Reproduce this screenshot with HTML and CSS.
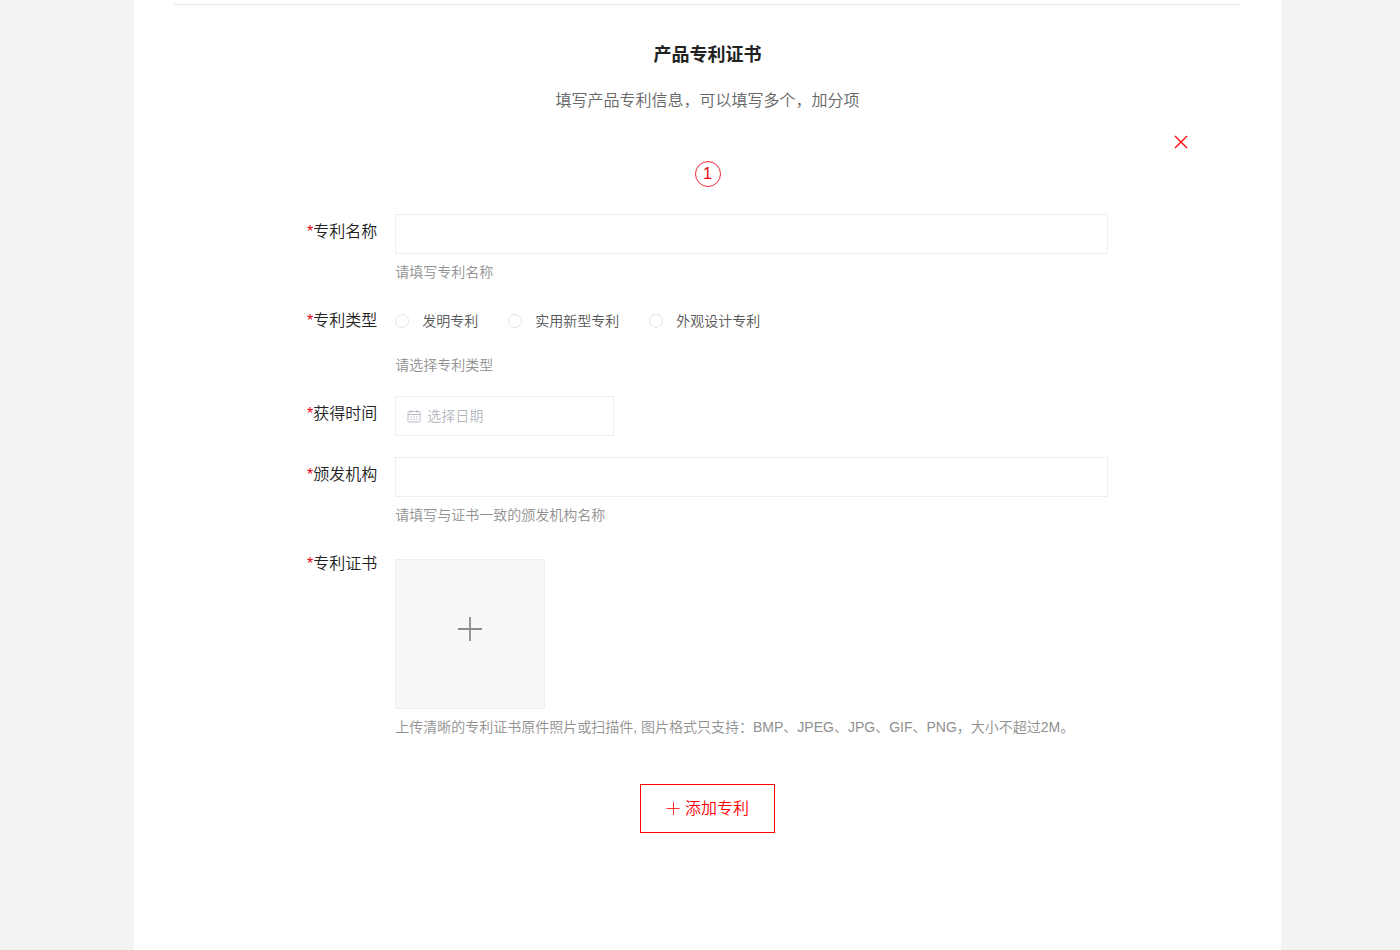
FILE: index.html
```html
<!DOCTYPE html>
<html lang="zh-CN">
<head>
    <meta charset="UTF-8">
    <meta name="viewport" content="width=device-width, initial-scale=1">
    <title>产品专利证书</title>
    <link rel="stylesheet" href="styles.css">
</head>
<body>
    <main class="container">
        <hr class="divider">
        <h2>产品专利证书</h2>
        <p class="subtitle">填写产品专利信息，可以填写多个，加分项</p>
        <div class="close-row">
            <button type="button" class="close-btn" aria-label="删除">
                <svg width="14" height="14" viewBox="0 0 14 14"><path d="M1 1l12 12M13 1L1 13" stroke="currentColor" stroke-width="1.3" fill="none"/></svg>
            </button>
        </div>
        <div class="number">1</div>
        <form class="patent-form">
            <div class="row">
                <label class="row-label" for="patentName"><span class="star">*</span>专利名称</label>
                <div class="field">
                    <input type="text" id="patentName" class="text-input">
                    <p class="hint">请填写专利名称</p>
                </div>
            </div>
            <div class="row" role="radiogroup" aria-labelledby="typeLabel">
                <span class="row-label" id="typeLabel"><span class="star">*</span>专利类型</span>
                <div class="field">
                    <div class="radios">
                        <label class="radio"><input type="radio" name="type">发明专利</label>
                        <label class="radio"><input type="radio" name="type">实用新型专利</label>
                        <label class="radio"><input type="radio" name="type">外观设计专利</label>
                    </div>
                    <p class="hint hint-radio">请选择专利类型</p>
                </div>
            </div>
            <div class="row">
                <label class="row-label" for="patentDate"><span class="star">*</span>获得时间</label>
                <div class="field">
                    <div class="date-box">
                        <svg width="14" height="14" viewBox="0 0 14 14" fill="none" stroke="currentColor">
                            <rect x="1" y="2.5" width="12" height="10.5" rx="0.5"/>
                            <path d="M1 5.5h12M4 1v3M10 1v3"/>
                            <path d="M3.5 8h1.5M6.2 8h1.6M9 8h1.5M3.5 10.5h1.5M6.2 10.5h1.6M9 10.5h1.5"/>
                        </svg>
                        <input type="text" id="patentDate" placeholder="选择日期">
                    </div>
                </div>
            </div>
            <div class="row">
                <label class="row-label" for="patentOrg"><span class="star">*</span>颁发机构</label>
                <div class="field">
                    <input type="text" id="patentOrg" class="text-input">
                    <p class="hint">请填写与证书一致的颁发机构名称</p>
                </div>
            </div>
            <div class="row">
                <span class="row-label" id="fileLabel"><span class="star">*</span>专利证书</span>
                <div class="field">
                    <button type="button" class="upload" aria-labelledby="fileLabel">
                        <svg width="26" height="26" viewBox="0 0 26 26"><path d="M1 13h24M13 1v24" stroke="currentColor" stroke-width="1.8" fill="none"/></svg>
                    </button>
                    <p class="hint">上传清晰的专利证书原件照片或扫描件, 图片格式只支持：BMP、JPEG、JPG、GIF、PNG，大小不超过2M。</p>
                </div>
            </div>
            <button type="button" class="add-btn">
                <svg width="14" height="14" viewBox="0 0 14 14"><path d="M0.5 6.5h13M7.5 0v13" stroke="currentColor" stroke-width="0.8" fill="none"/></svg>
                添加专利
            </button>
        </form>
    </main>
</body>
</html>
```
FILE: styles.css
```css
* { box-sizing: border-box; }
body {
    font-family: "Liberation Sans", "Noto Sans CJK SC", sans-serif;
    font-weight: 350;
    margin: 0;
    padding: 0 119px 0 134px;
    background: #f3f3f3;
    color: #222;
}
button, input {
    font-family: inherit;
    font-weight: inherit;
}
svg { display: block; }
.container {
    background: #fff;
    min-height: 100vh;
    padding: 4px 40px 40px;
}
.divider {
    margin: 0;
    border: none;
    border-top: 1px solid #e8e8e8;
}
h2 {
    margin: 36px 0 0;
    font-size: 18px;
    line-height: 28px;
    font-weight: bold;
    text-align: center;
}
.subtitle {
    margin: 20px 0 0;
    font-size: 16px;
    line-height: 24px;
    text-align: center;
    color: #666;
}
.close-row {
    display: flex;
    justify-content: flex-end;
    padding: 21px 52px 0 0;
}
.close-btn {
    padding: 1px;
    border: none;
    background: none;
    color: #f00;
    cursor: pointer;
}
.number {
    width: 26px;
    height: 26px;
    margin: 11px auto 27px;
    border: 1px solid #f0283c;
    border-radius: 50%;
    font-size: 16px;
    line-height: 24px;
    text-align: center;
    color: #e60012;
}
.patent-form {
    padding: 0 133px;
    display: flex;
    flex-direction: column;
    gap: 21px;
}
.row {
    display: flex;
    gap: 18px;
}
.row-label {
    flex: 0 0 70px;
    font-size: 16px;
    line-height: 36px;
    white-space: nowrap;
}
.star { color: #e60012; }
.field {
    flex: 1;
    min-width: 0;
}
.text-input {
    display: block;
    width: 100%;
    height: 40px;
    padding: 0 12px;
    border: 1px solid #eee;
    font-size: 14px;
    outline: none;
}
.hint {
    margin: 8px 0 0;
    font-size: 14px;
    line-height: 20px;
    color: #909090;
}
.hint-radio { margin-top: 16px; }
.radios {
    display: flex;
    flex-wrap: wrap;
    gap: 30px;
}
.radio {
    display: flex;
    align-items: center;
    gap: 13px;
    font-size: 14px;
    line-height: 36px;
    color: #555;
}
.radio input {
    appearance: none;
    width: 14px;
    height: 14px;
    margin: 0;
    border: 1px solid #e2e4ea;
    border-radius: 50%;
    background: #fff;
}
.radio input:checked {
    border: 4px solid #f00;
}
.date-box {
    display: flex;
    align-items: center;
    gap: 6px;
    width: 219px;
    height: 40px;
    padding: 0 11px;
    border: 1px solid #eee;
    color: #b8bcc6;
}
.date-box input {
    flex: 1;
    min-width: 0;
    padding: 0;
    border: none;
    font-size: 14px;
    line-height: 20px;
    outline: none;
}
.date-box input::placeholder { color: #b4b8c0; }
.upload {
    display: flex;
    align-items: center;
    justify-content: center;
    width: 150px;
    height: 150px;
    margin-top: 13px;
    padding: 0 0 10px;
    border: 1px solid #eee;
    background: #f8f8f8;
    color: #8c8c8c;
    cursor: pointer;
}
.add-btn {
    align-self: center;
    display: flex;
    align-items: center;
    gap: 5px;
    margin-top: 26px;
    padding: 0 25px;
    border: 1px solid #f00;
    background: #fff;
    font-size: 16px;
    line-height: 47px;
    color: #f00;
    cursor: pointer;
}
```
